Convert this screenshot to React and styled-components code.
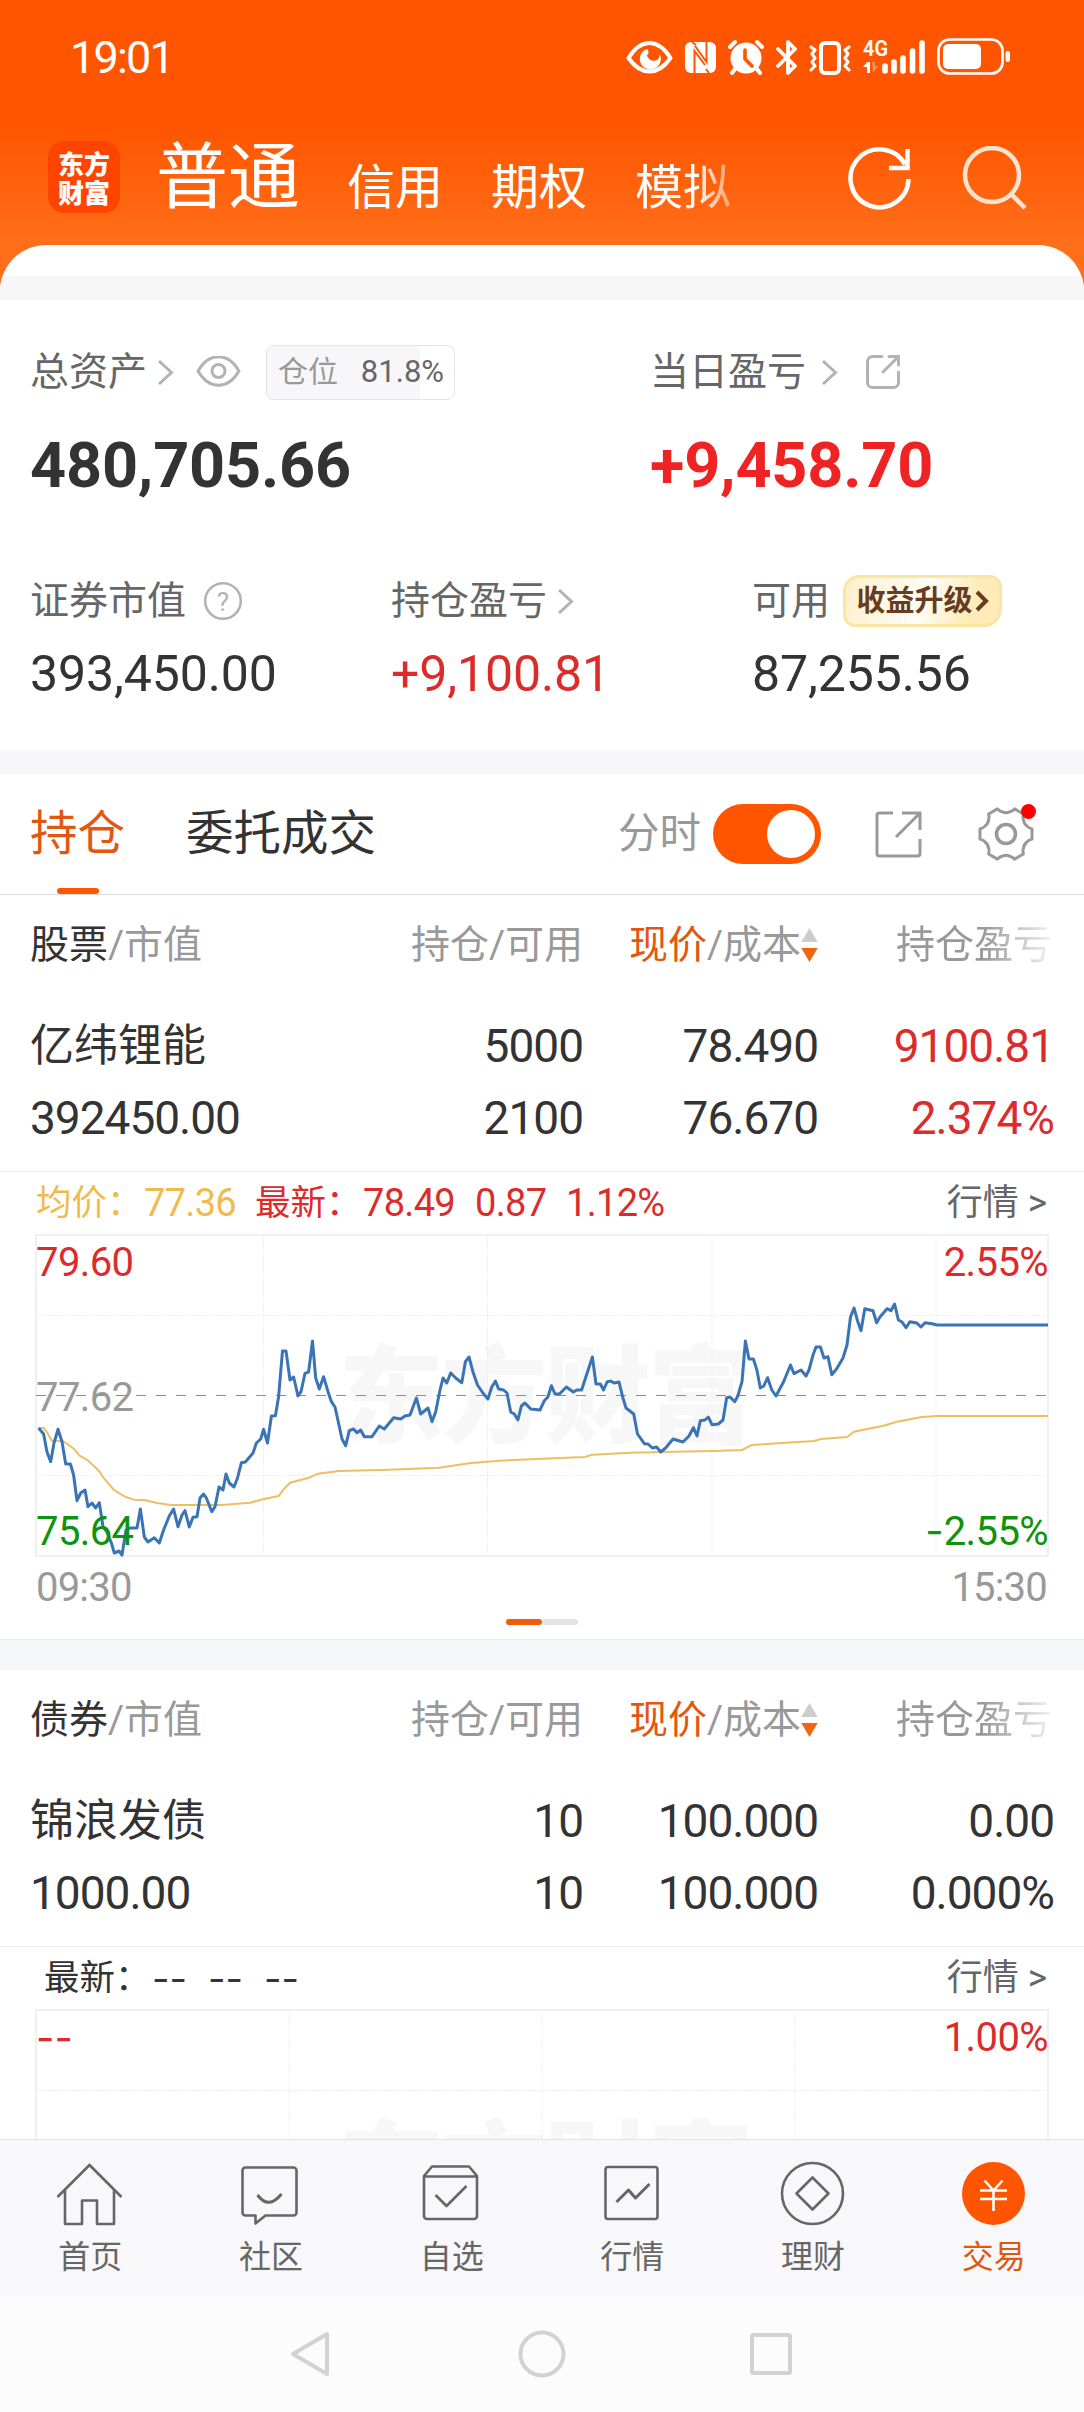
import styled, { createGlobalStyle } from "styled-components";

const colors = {
  primary: "#ff5500",
  orangeText: "#e2570f",
  dark: "#333333",
  mid: "#666666",
  light: "#999999",
  icon: "#b3b3b3",
  red: "#dc2b2b",
  green: "#0d930d",
  gold: "#f0bb4d",
  band: "#f7f7fa",
};

const PRICE_LINE =
  "2.6,193 7.6,199 11,217 14.7,226.7 18,208 22,194.3 26,206.7 29.7,229 34.4,229 37.6,240 41,265.7 44.7,258 49,255 52,271.7 56,268 59.7,273 63.3,267.7 67,291.7 71,297 75.4,308 78.3,318 83,316 86,320 90,295 94,293 101,293 104.4,274 108.3,302 112,307 118.3,302.7 123.3,308 127.6,295 133.3,281 137.6,274 142,291.7 146,280 149,275.7 153.3,292 157,282.3 161,281.7 164,263 167.6,259 170.4,263 175.8,276.7 179,271.7 183,252 187,255 190,239 193.3,248 198,252 201.5,243 205.4,227.7 209.4,227 217,218 220.4,208 224.7,204 227.6,194.3 231.5,208 235.4,181 239.4,180.7 242.6,161.7 246.5,116 250,116 254,145 257.6,142 262,161 265,156.7 269,138.3 272.6,137 276.5,106 279.7,143 283.3,154 287.6,141.7 292,156.7 295.4,166.7 299,172 302.6,188.3 306,204 309.7,210.7 313.3,195.7 317.6,194 321,197.7 324.7,195 328.3,201.7 336,201.7 343.3,191 348.3,194 357.6,182.7 364.7,184 369,181 374,180 380.4,163 384.7,179 392,173 396,186.7 399.7,176.7 404,155 407,143 410.8,148 414.7,138 419.7,143 425.8,147.7 429.4,126.7 433,122 436.9,136.7 441.5,150 446.9,158 451.9,164 455.8,152 459.4,146 462.6,154 467.6,155 471,158 474.7,177 478.3,179 481.9,185 485.4,171 489,168 494.7,174 504,175 508.3,165.7 511.9,162 515.4,150.7 519,159 523.4,159 530.4,152 537.3,157 540.8,155 545.6,155 550.5,140 556.4,122 560,149 564.4,149 567.5,155 571.3,146.7 574.8,146 578,148 583,147 586.6,161.7 590,173 597.7,179 601.5,199 608.4,208.7 612,209 616.4,213 620.6,212 624.7,217 629.6,213 637,204 647,207 653,201 657.4,192.7 661,201 664.3,185.7 669,185 672.3,182 676,189.7 682.3,189 687,185 690.7,162.7 694,162 698.7,166.7 701.8,161 706,146.7 709.4,106 713,124 717.4,124 720.9,135 724.3,153 727.8,151 731.6,142.7 735.8,155 740,161 747.6,146.7 754.5,130 758,138.7 765,135 770,141 773,135 777,120 780,112 784.4,112 788,123 792,121.7 795.8,139.7 800.7,133.7 807,123 811,110 814.5,82 818,73 821.5,85.7 825,95.7 828.8,73.7 837,75.7 840.6,87.7 844,82 851,73.7 855,75.7 858.6,69 862.4,85 866,87 870,92.7 873.9,86.7 880.8,88 885,92 889,87.7 896,88.7 901,90 1012,90";

const AVERAGE_LINE =
  "2.6,193 7.6,193 11.5,198 16,206 26.5,206 37,213 44,221 51.5,225 63,236 67.6,243 78,255 89,261.7 98,264.7 108.6,265 121,268 135,270 185,270 214,267.7 228,264 242.6,261 248,254 254,247.7 273,242.7 282,238.7 303,236 353,234.7 403,232.7 435,228 464,225.7 524,223 549,222 556,219.7 594,217.7 625,217 677.5,216 706,215 715.7,210 778,206 785,204 811,202 818,196.7 847.5,190.7 861,186.7 885.7,182 901,181 1012,181";

const stock = {
  kind: "股票",
  rows: [
    ["亿纬锂能", "5000", "78.490", "9100.81"],
    ["392450.00", "2100", "76.670", "2.374%"],
  ],
  up: true,
};

const bond = {
  kind: "债券",
  rows: [
    ["锦浪发债", "10", "100.000", "0.00"],
    ["1000.00", "10", "100.000", "0.000%"],
  ],
  up: false,
};

const gearPath = () => {
  const point = (deg, r) => {
    const a = (deg * Math.PI) / 180;
    return `${(29 + r * Math.cos(a)).toFixed(1)} ${(29 + r * Math.sin(a)).toFixed(1)}`;
  };
  let d = `M${point(-11, 26.5)}`;
  for (let k = 0; k < 6; k++) {
    const deg = k * 60;
    d += `L${point(deg + 11, 26.5)}Q${point(deg + 17, 22.5)} ${point(deg + 21, 22.5)}`;
    d += `Q${point(deg + 30, 20.5)} ${point(deg + 39, 22.5)}Q${point(deg + 43, 22.5)} ${point(deg + 49, 26.5)}`;
  }
  return d + "Z";
};

/* ---------- icons ---------- */

const StatusIcons = () => (
  <StatusIconRow>
    <svg width="47" height="40" fill="none" stroke="#fff" strokeWidth="4">
      <path d="M2.500 21C15 1 32 1 44.500 21C32 39 15 39 2.500 21Z" strokeLinejoin="round" />
      <path d="M21 12a10.500 10.500 0 1 0 12 4c3 9-10 11-12 2c2-1 2-4 0-6Z" fill="#fff" stroke="none" />
    </svg>
    <svg width="31" height="40">
      <rect x="0" y="5" width="31" height="31" rx="6" fill="#fff" />
      <path d="M9.500 36V14L20 28M7 5l4 3M21.500 5v20L10 9M24 36l-3-4" fill="none" stroke={colors.primary} strokeWidth="2" />
    </svg>
    <svg width="36" height="40" fill="none" stroke="#fff" strokeWidth="4" strokeLinecap="round">
      <circle cx="18" cy="21" r="15.500" fill="#fff" stroke="none" />
      <path d="M2 10l5-5M34 10l-5-5M7 32l-3 4M29 32l3 4" />
      <path d="M17 13v9l7 7" stroke={colors.primary} strokeWidth="3.600" />
    </svg>
    <svg width="22" height="40" fill="none" stroke="#fff" strokeWidth="3.800" strokeLinejoin="round" strokeLinecap="round">
      <path d="M2 12l17 17-7 7V5l7 7L2 29" />
    </svg>
    <svg width="42" height="40" fill="none" stroke="#fff" strokeWidth="4" strokeLinejoin="round">
      <rect x="12" y="6" width="18" height="30" rx="4" />
      <path
        d="M2 10l4 3-3 4 3 4-3 4 3 4-4 4M40 10l-4 3 3 4-3 4 3 4-3 4 4 4"
        strokeWidth="3"
        strokeLinecap="round"
      />
    </svg>
    <svg width="62" height="40">
      <text x="0" y="19" fill="#fff" fontSize="22" fontWeight="600" textLength="25" lengthAdjust="spacingAndGlyphs">
        4G
      </text>
      <path d="M0 30l4-5h3v11H4v-6Z" fill="#fff" />
      <path d="M9 25h3v4h3l-5 7Z" fill="#fff" opacity="0.35" />
      <path d="M22 29v5M31 25v9M40 21v13M49.500 14v20M59 6v28" stroke="#fff" strokeWidth="5.600" strokeLinecap="round" />
    </svg>
    <svg width="73" height="40">
      <rect x="1.500" y="2.500" width="64" height="34" rx="11" fill="none" stroke="#fff" strokeWidth="2.600" />
      <rect x="6" y="7" width="38" height="25" rx="5" fill="#fff" />
      <rect x="68.500" y="14" width="4.500" height="11" rx="2" fill="#fff" />
    </svg>
  </StatusIconRow>
);

const RefreshIcon = () => (
  <svg width="64" height="66" fill="none" stroke="#fff" strokeWidth="4.500">
    <path d="M60.500 33A29 29 0 1 1 57 18.500" />
    <path d="M59.500 3v19H41" />
  </svg>
);

const SearchIcon = () => (
  <svg width="66" height="66" fill="none" stroke="#ffe3cf" strokeWidth="4.500">
    <circle cx="31" cy="29" r="27" />
    <path d="M50 48l14 14" />
  </svg>
);

const Chevron = () => (
  <svg width="17" height="26" fill="none" stroke={colors.icon} strokeWidth="3">
    <path d="M2 2l12.500 11.500L2 25" />
  </svg>
);

const EyeIcon = () => (
  <svg width="45" height="32" fill="none" stroke={colors.icon} strokeWidth="3">
    <path d="M2 15C13-4 32-4 43 15C32 34 13 34 2 15Z" strokeLinejoin="round" />
    <circle cx="22.500" cy="15" r="6.500" />
  </svg>
);

const SmallShareIcon = () => (
  <svg width="36" height="36" fill="none" stroke={colors.icon} strokeWidth="3" strokeLinecap="round">
    <path d="M17 2.500H7.500a5 5 0 0 0-5 5v21a5 5 0 0 0 5 5h21a5 5 0 0 0 5-5V18" />
    <path d="M24 2.500h9.500V11M33 3L18 18" />
  </svg>
);

const ShareIcon = () => (
  <svg width="47" height="47" fill="none" stroke={colors.light} strokeWidth="3">
    <path d="M18 2H4.500a2.500 2.500 0 0 0-2.500 2.500v38a2.500 2.500 0 0 0 2.500 2.500h38a2.500 2.500 0 0 0 2.500-2.500V28" />
    <path d="M27 2h18v17M45 2L21 26" />
  </svg>
);

const GearIcon = () => (
  <svg width="58" height="58" fill="none" stroke={colors.light} strokeWidth="3" strokeLinejoin="round">
    <path d={gearPath()} />
    <circle cx="29" cy="29" r="9.500" strokeWidth="3.600" />
  </svg>
);

const HelpIcon = () => (
  <svg width="40" height="40">
    <circle cx="20" cy="20" r="17.800" fill="none" stroke={colors.icon} strokeWidth="2.600" />
    <text x="20" y="29.500" textAnchor="middle" fontSize="26" fill={colors.icon}>
      ?
    </text>
  </svg>
);

const SortIcon = () => (
  <svg width="17" height="36">
    <path d="M8.500 1l8.200 14H.300Z" fill="#cccccc" />
    <path d="M8.500 35l8.200-14H.300Z" fill="#f2640f" />
  </svg>
);

const tabs = [
  {
    label: "首页",
    icon: <path d="M3 38L35 6l32 32M10.500 31v34h17V41.500h15V65h17V31" />,
  },
  {
    label: "社区",
    icon: (
      <>
        <path d="M11 8.500h48a3 3 0 0 1 3 3v42a3 3 0 0 1-3 3H31L21 64.500v-8H11a3 3 0 0 1-3-3v-42a3 3 0 0 1 3-3Z" />
        <path d="M23 36q11 15 24-1" strokeWidth="3" />
      </>
    ),
  },
  {
    label: "自选",
    icon: (
      <>
        <path d="M8.500 17l8-9.500h37l8 9.500v40a3 3 0 0 1-3 3h-47a3 3 0 0 1-3-3ZM8.500 17.500h53" />
        <path d="M20 36l11 11 20-20" />
      </>
    ),
  },
  {
    label: "行情",
    icon: (
      <>
        <rect x="9" y="8" width="52" height="52" rx="2.500" />
        <path d="M20 43l12-12 7 8 14-14" strokeWidth="3" />
      </>
    ),
  },
  {
    label: "理财",
    round: true,
    icon: (
      <>
        <circle cx="34.500" cy="34.500" r="30.500" />
        <path d="M34.500 18.500l16 16-16 16-16-16Z" />
      </>
    ),
  },
  {
    label: "交易",
    round: true,
    active: true,
    icon: (
      <>
        <circle cx="34.500" cy="34.500" r="31.500" fill={colors.primary} stroke="none" />
        <path d="M25.500 21.500l9 10 9-10M21 31.500h27M21 40h27M34.500 31v21" stroke="#fff" />
      </>
    ),
  },
];

/* ---------- blocks ---------- */

function HoldingTable({ data }) {
  return (
    <>
      <TableHead>
        <span>
          <Strong>{data.kind}</Strong>/市值
        </span>
        <Right>持仓/可用</Right>
        <Right>
          <Orange>现价</Orange>/成本
          <SortIcon />
        </Right>
        <FadedHead>持仓盈亏</FadedHead>
      </TableHead>
      <TableBody>
        {data.rows.map((row, i) => (
          <TableRow key={row[0]}>
            <Name $cjk={i === 0}>{row[0]}</Name>
            <Right>{row[1]}</Right>
            <Right>{row[2]}</Right>
            <Profit $up={data.up}>{row[3]}</Profit>
          </TableRow>
        ))}
      </TableBody>
    </>
  );
}

function ChartGrid({ columns, children }) {
  return (
    <svg width="1014" height="323" viewBox="-1 -1 1014 323" fill="none">
      <text
        x="302"
        y="199"
        fontFamily="Noto Sans CJK SC"
        fontWeight="900"
        fontSize="106"
        textLength="416"
        fill="#f7f7f7"
      >
        东方财富
      </text>
      <g stroke="#e9e9e9" strokeDasharray="1.500 1.500">
        {columns.map((x) => (
          <path key={x} d={`M${x} 0v321`} />
        ))}
        <path d="M0 80.500h1012M0 240.500h1012" />
      </g>
      <rect width="1012" height="321" stroke="#f0f0f0" strokeWidth="2" />
      {children}
    </svg>
  );
}

export default function App() {
  return (
    <Screen>
      <GlobalStyle />
      <StatusBar>
        <Clock>19:01</Clock>
        <StatusIcons />
      </StatusBar>
      <NavRow>
        <Logo>
          <span>东方</span>
          <span>财富</span>
        </Logo>
        <NavTitle>普通</NavTitle>
        <NavTab>信用</NavTab>
        <NavTab>期权</NavTab>
        <NavTab $faded>模拟</NavTab>
        <NavActions>
          <RefreshIcon />
          <SearchIcon />
        </NavActions>
      </NavRow>

      <Sheet>
        <SheetTop />
        <Band />
        <Summary>
          <TotalsGrid>
            <div>
              <LabelRow $height={54}>
                总资产
                <IconGap $left={10}>
                  <Chevron />
                </IconGap>
                <IconGap $left={22}>
                  <EyeIcon />
                </IconGap>
                <PositionBadge>
                  <span>仓位</span>
                  <b>81.8%</b>
                </PositionBadge>
              </LabelRow>
              <Total>480,705.66</Total>
            </div>
            <div>
              <LabelRow $height={54}>
                当日盈亏
                <IconGap $left={15}>
                  <Chevron />
                </IconGap>
                <IconGap $left={27}>
                  <SmallShareIcon />
                </IconGap>
              </LabelRow>
              <Total $up>+9,458.70</Total>
            </div>
          </TotalsGrid>
          <DetailGrid>
            <div>
              <LabelRow $height={52}>
                证券市值
                <IconGap $left={17}>
                  <HelpIcon />
                </IconGap>
              </LabelRow>
              <Amount>393,450.00</Amount>
            </div>
            <div>
              <LabelRow $height={52}>
                持仓盈亏
                <IconGap $left={10}>
                  <Chevron />
                </IconGap>
              </LabelRow>
              <Amount $up>+9,100.81</Amount>
            </div>
            <div>
              <LabelRow $height={52}>
                可用
                <UpgradeBadge>
                  收益升级
                  <svg width="14" height="24" fill="none" stroke="#663c22" strokeWidth="4">
                    <path d="M2 3l9 9-9 9" />
                  </svg>
                </UpgradeBadge>
              </LabelRow>
              <Amount>87,255.56</Amount>
            </div>
          </DetailGrid>
        </Summary>
        <Band />

        <SectionTabs>
          <SectionTab $active>持仓</SectionTab>
          <SectionTab>委托成交</SectionTab>
          <TimeShare>分时</TimeShare>
          <Toggle>
            <Knob />
          </Toggle>
          <ShareIcon />
          <GearWrap>
            <GearIcon />
            <RedDot />
          </GearWrap>
        </SectionTabs>

        <HoldingTable data={stock} />
        <Legend>
          <LegendItem $color={colors.gold} $width={219}>
            <span>均价：</span>
            <span>77.36</span>
          </LegendItem>
          <LegendItem $color={colors.red}>
            <span>最新：</span>
            <LegendValue $width={112}>78.49</LegendValue>
            <LegendValue $width={91}>0.87</LegendValue>
            <span>1.12%</span>
          </LegendItem>
          <QuoteLink>
            行情 <i>&gt;</i>
          </QuoteLink>
        </Legend>
        <ChartBox>
          <ChartGrid columns={[227.5, 451.5, 676, 900]}>
            <path d="M0 160.500h1012" stroke="#8c8c8c" strokeWidth="1.200" strokeDasharray="10 10" />
            <polyline points={AVERAGE_LINE} stroke="#ecbf63" strokeWidth="2" />
            <polyline points={PRICE_LINE} stroke="#3b74b5" strokeWidth="3" strokeLinejoin="round" />
          </ChartGrid>
          <AxisColumn>
            <AxisLabel $color={colors.red}>79.60</AxisLabel>
            <AxisLabel $color={colors.light}>77.62</AxisLabel>
            <AxisLabel $color={colors.green}>75.64</AxisLabel>
          </AxisColumn>
          <AxisColumn $right>
            <AxisLabel $color={colors.red}>2.55%</AxisLabel>
            <AxisLabel $color={colors.green}>
              <Dash>-</Dash>2.55%
            </AxisLabel>
          </AxisColumn>
        </ChartBox>
        <TimeAxis>
          <span>09:30</span>
          <span>15:30</span>
        </TimeAxis>
        <Pager>
          <PagerBar $active />
          <PagerBar />
        </Pager>
        <Band $tall />

        <HoldingTable data={bond} />
        <Legend>
          <LegendItem $color={colors.dark} $indent>
            <span>最新：</span>
            <LegendDash>--</LegendDash>
            <LegendDash>--</LegendDash>
            <LegendDash>--</LegendDash>
          </LegendItem>
          <QuoteLink>
            行情 <i>&gt;</i>
          </QuoteLink>
        </Legend>
        <ChartBox>
          <ChartGrid columns={[253, 506, 759]} />
          <AxisColumn>
            <AxisLabel $color={colors.red}>
              <Dash>--</Dash>
            </AxisLabel>
          </AxisColumn>
          <AxisColumn $right>
            <AxisLabel $color={colors.red}>1.00%</AxisLabel>
          </AxisColumn>
        </ChartBox>
      </Sheet>

      <TabBar>
        {tabs.map((tab) => (
          <TabItem key={tab.label} $active={tab.active}>
            <svg
              width="69"
              height="69"
              viewBox={tab.round ? "0 0 69 69" : "1.5 0 69 69"}
              fill="none"
              stroke={colors.mid}
              strokeWidth="2.600"
              strokeLinejoin="round"
            >
              {tab.icon}
            </svg>
            {tab.label}
          </TabItem>
        ))}
      </TabBar>
      <SystemNav>
        <svg width="46" height="50">
          <path d="M40 5v40L6 25Z" />
        </svg>
        <svg width="50" height="50">
          <circle cx="26" cy="25" r="21.500" />
        </svg>
        <svg width="46" height="46">
          <rect x="4" y="4" width="38" height="38" rx="1.500" />
        </svg>
      </SystemNav>
    </Screen>
  );
}

/* ---------- styles ---------- */

const GlobalStyle = createGlobalStyle`
  * {
    box-sizing: border-box;
  }
  body {
    margin: 0;
    font-family: Roboto, "Noto Sans CJK SC", sans-serif;
    color: ${colors.dark};
  }
  svg {
    display: block;
    flex-shrink: 0;
  }
`;

const Screen = styled.div`
  width: 1084px;
  height: 2412px;
  display: flex;
  flex-direction: column;
  overflow: hidden;
  background: linear-gradient(#ff5500 125px, #ff6f1a 245px, #ff6f1a);
`;

const StatusBar = styled.div`
  height: 114px;
  padding: 0 74px 0 70px;
  display: flex;
  align-items: center;
  justify-content: space-between;
`;
const Clock = styled.div`
  font-size: 45px;
  font-weight: 450;
  letter-spacing: -1.8px;
  color: #fff;
`;
const StatusIconRow = styled.div`
  display: flex;
  gap: 11.8px;
`;

const NavRow = styled.div`
  height: 131px;
  padding: 0 57px 32px 48px;
  display: flex;
  align-items: flex-end;
  color: #fff;
`;
const Logo = styled.div`
  width: 72px;
  height: 72px;
  border-radius: 16px;
  background: #ff4400;
  display: flex;
  flex-direction: column;
  align-items: center;
  justify-content: center;
  font-family: "Noto Sans CJK SC", sans-serif;
  font-size: 26px;
  font-weight: 900;
  line-height: 29px;
`;
const NavTitle = styled.div`
  margin: 0 47px 0 36px;
  font-size: 72px;
  line-height: 71px;
`;
const NavTab = styled.div`
  width: 144px;
  margin-bottom: 2px;
  font-size: 48px;
  line-height: 47px;
  ${({ $faded }) =>
    $faded && "mask-image: linear-gradient(to right, #000 60px, rgba(0, 0, 0, 0.4) 95px);"}
`;
const NavActions = styled.div`
  margin-left: auto;
  margin-bottom: 1px;
  display: flex;
  gap: 49px;
`;

const Sheet = styled.main`
  flex: 1;
  min-height: 0;
  overflow: hidden;
  border-radius: 46px 46px 0 0;
  background: #fff;
`;
const SheetTop = styled.div`
  height: 31px;
`;
const Band = styled.div`
  height: ${({ $tall }) => ($tall ? 31 : 24)}px;
  background: ${({ $tall }) => ($tall ? "#f5f7fa" : colors.band)};
  border-top: ${({ $tall }) => ($tall ? "1px solid #ebebeb" : "none")};
`;

const Summary = styled.section`
  height: 450px;
  padding: 45px 30px 0;
`;
const TotalsGrid = styled.div`
  display: grid;
  grid-template-columns: 620px 1fr;
`;
const DetailGrid = styled.div`
  margin-top: 77px;
  display: grid;
  grid-template-columns: 361px 361px 1fr;
`;
const LabelRow = styled.div`
  height: ${({ $height }) => $height}px;
  display: flex;
  align-items: center;
  font-size: 39px;
  line-height: 40px;
  color: ${colors.mid};
  white-space: nowrap;
`;
const IconGap = styled.span`
  margin-left: ${({ $left }) => $left}px;
`;
const PositionBadge = styled.div`
  width: 189px;
  height: 55px;
  margin-left: 25px;
  padding: 0 10px 0 11px;
  display: flex;
  align-items: center;
  justify-content: space-between;
  border: 1px solid #e4e4e6;
  border-radius: 8px;
  background: linear-gradient(to right, ${colors.band} 81.8%, #fff 81.8%);
  font-size: 30px;
  color: ${colors.light};
  b {
    font-weight: 400;
    font-size: 31px;
    color: ${colors.mid};
  }
`;
const Total = styled.div`
  margin-top: 35px;
  font-size: 63px;
  line-height: 64px;
  font-weight: 700;
  letter-spacing: -0.2px;
  color: ${({ $up }) => ($up ? "#ee2424" : colors.dark)};
`;
const Amount = styled.div`
  margin-top: 17px;
  font-size: 50px;
  line-height: 60px;
  letter-spacing: -0.1px;
  color: ${({ $up }) => ($up ? colors.red : colors.dark)};
`;
const UpgradeBadge = styled.div`
  width: 159px;
  height: 52px;
  margin-left: 13px;
  display: flex;
  align-items: center;
  justify-content: center;
  gap: 2px;
  border: 3px solid #f9e6a0;
  border-radius: 16px 12px 18px 12px;
  background: linear-gradient(110deg, #ffefcb, #fffdf6 50%, #ffebb8 80%);
  font-size: 29px;
  font-weight: 700;
  color: #663c22;
`;

const SectionTabs = styled.div`
  height: 121px;
  padding: 0 49px 0 30px;
  display: flex;
  align-items: center;
  border-bottom: 1px solid #dddddd;
`;
const SectionTab = styled.div`
  position: relative;
  margin-right: 61px;
  padding-top: 1px;
  font-size: 47.5px;
  line-height: 119px;
  color: ${({ $active }) => ($active ? colors.orangeText : colors.dark)};
  &::after {
    content: "";
    display: ${({ $active }) => ($active ? "block" : "none")};
    position: absolute;
    left: 27px;
    bottom: 0;
    width: 42px;
    height: 6px;
    border-radius: 3px;
    background: ${colors.primary};
  }
`;
const TimeShare = styled.div`
  margin-left: auto;
  font-size: 41.5px;
  line-height: 46px;
  color: ${colors.light};
`;
const Toggle = styled.div`
  width: 108px;
  height: 60px;
  margin: 0 54px 0 12px;
  padding: 6px;
  display: flex;
  justify-content: flex-end;
  border-radius: 30px;
  background: ${colors.primary};
`;
const Knob = styled.div`
  width: 48px;
  height: 48px;
  border-radius: 50%;
  background: #fff;
`;
const GearWrap = styled.div`
  position: relative;
  margin-left: 55px;
`;
const RedDot = styled.i`
  position: absolute;
  top: -1px;
  right: -1px;
  width: 15px;
  height: 15px;
  border-radius: 50%;
  background: #fe0000;
`;

const TableRow = styled.div`
  display: grid;
  grid-template-columns: 320px 233px 235px 1fr;
  padding: 0 30px;
  font-size: 46px;
  line-height: 72px;
  letter-spacing: -1px;
`;
const TableHead = styled(TableRow)`
  height: 100px;
  font-size: 39px;
  line-height: 100px;
  letter-spacing: 0;
  color: ${colors.light};
`;
const TableBody = styled.div`
  height: 176px;
  padding-top: 15px;
`;
const Name = styled.span`
  font-size: ${({ $cjk }) => ($cjk ? 44 : 46)}px;
  letter-spacing: ${({ $cjk }) => ($cjk ? 0 : -1)}px;
  padding-top: ${({ $cjk }) => ($cjk ? 1 : 0)}px;
  line-height: ${({ $cjk }) => ($cjk ? 71 : 72)}px;
  white-space: nowrap;
`;
const Right = styled.span`
  display: flex;
  align-items: center;
  justify-content: flex-end;
`;
const Profit = styled(Right)`
  color: ${({ $up }) => ($up ? colors.red : colors.dark)};
`;
const FadedHead = styled(Right)`
  padding-right: 2px;
  mask-image: linear-gradient(to right, #000 70%, rgba(0, 0, 0, 0.1));
`;
const Strong = styled.span`
  color: ${colors.dark};
`;
const Orange = styled.span`
  color: ${colors.orangeText};
`;

const Legend = styled.div`
  height: 63px;
  padding: 0 37px 0 36px;
  display: flex;
  align-items: center;
  border-top: 1px solid #ebebeb;
  font-size: 38px;
  line-height: 44px;
  letter-spacing: -0.7px;
  white-space: nowrap;
`;
const LegendItem = styled.div`
  width: ${({ $width }) => ($width ? `${$width}px` : "auto")};
  margin-left: ${({ $indent }) => ($indent ? 8 : 0)}px;
  display: flex;
  align-items: center;
  color: ${({ $color }) => $color};
  & > span:first-child {
    width: 108px;
    font-size: 35.5px;
    letter-spacing: 0;
  }
`;
const LegendValue = styled.span`
  width: ${({ $width }) => $width}px;
`;
const Dash = styled.span`
  font-family: Inter, sans-serif;
  letter-spacing: 0;
`;
const LegendDash = styled(Dash)`
  width: 56px;
`;
const QuoteLink = styled.div`
  margin-left: auto;
  font-size: 36px;
  letter-spacing: 0;
  color: ${colors.mid};
  i {
    font-style: normal;
    font-size: 37px;
  }
`;

const ChartBox = styled.div`
  position: relative;
  margin: 0 35px;
  height: 323px;
`;
const AxisColumn = styled.div`
  position: absolute;
  top: 5px;
  bottom: 1px;
  ${({ $right }) => ($right ? "right: 1px; text-align: right;" : "left: 1px;")}
  display: flex;
  flex-direction: column;
  justify-content: space-between;
`;
const AxisLabel = styled.span`
  font-size: 40px;
  line-height: 48px;
  letter-spacing: -0.6px;
  color: ${({ $color }) => $color};
`;
const TimeAxis = styled.div`
  padding: 0 37px 0 36px;
  display: flex;
  justify-content: space-between;
  font-size: 40px;
  line-height: 62px;
  letter-spacing: -0.8px;
  color: ${colors.light};
`;
const Pager = styled.div`
  height: 20px;
  display: flex;
  justify-content: center;
`;
const PagerBar = styled.div`
  width: 36px;
  height: 6px;
  border-radius: 3px;
  background: ${({ $active }) => ($active ? "#f25a0c" : "#e3e3e3")};
`;

const TabBar = styled.nav`
  height: 157px;
  padding-top: 19px;
  display: grid;
  grid-template-columns: repeat(6, 1fr);
  border-top: 1px solid #e2e2e4;
  background: #f8f8fa;
`;
const TabItem = styled.div`
  display: flex;
  flex-direction: column;
  align-items: center;
  font-size: 32px;
  line-height: 58px;
  color: ${({ $active }) => ($active ? colors.orangeText : colors.mid)};
`;
const SystemNav = styled.div`
  height: 116px;
  padding: 0 290px 0 287px;
  display: flex;
  align-items: center;
  justify-content: space-between;
  background: #fcfcfc;
  svg {
    fill: none;
    stroke: #d2d2d2;
    stroke-width: 4;
    stroke-linejoin: round;
  }
`;
